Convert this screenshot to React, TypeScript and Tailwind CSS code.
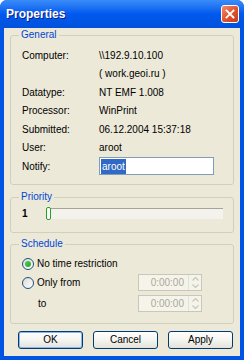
import React from 'react';

const font = { fontFamily: '"Liberation Sans", Arial, sans-serif' };

function Group({ title, className, children }: { title: string; className?: string; children: React.ReactNode }) {
  return (
    <fieldset className={`border border-[#D0D0BF] rounded-[3px] ${className ?? ''}`}>
      <legend className="ml-[8px] px-[2px] text-[#0046D5] text-[10px] leading-[12px]">{title}</legend>
      {children}
    </fieldset>
  );
}

function Radio({ checked }: { checked?: boolean }) {
  return (
    <span className="w-[12px] h-[12px] rounded-full border border-[#1C5180] bg-gradient-to-br from-[#DCDBD4] to-white flex items-center justify-center shrink-0">
      {checked && <span className="w-[6px] h-[6px] rounded-full bg-gradient-to-br from-[#55D051] to-[#21A121]" />}
    </span>
  );
}

function Spinner() {
  return (
    <div className="w-[64px] h-[17px] border border-[#C9C7BA] bg-[#F5F4EA] flex items-center">
      <span className="flex-1 text-right pr-[4px] text-[10px] text-[#ACA899]">0:00:00</span>
      <div className="w-[13px] h-full flex flex-col border-l border-[#E4E2D6]">
        <div className="flex-1 flex items-center justify-center">
          <svg width="7" height="4" viewBox="0 0 7 4"><path d="M0.5 3.5 L3.5 0.5 L6.5 3.5" stroke="#C9C7BA" fill="none" strokeWidth="1.2" /></svg>
        </div>
        <div className="flex-1 flex items-center justify-center">
          <svg width="7" height="4" viewBox="0 0 7 4"><path d="M0.5 0.5 L3.5 3.5 L6.5 0.5" stroke="#C9C7BA" fill="none" strokeWidth="1.2" /></svg>
        </div>
      </div>
    </div>
  );
}

function XpButton({ label, isDefault }: { label: string; isDefault?: boolean }) {
  return (
    <button
      className={`w-[65px] h-[18px] rounded-[3px] border border-[#003C74] bg-gradient-to-b from-white via-[#F4F4F0] to-[#E3E2DA] text-[10px] text-black leading-none ${
        isDefault ? 'shadow-[inset_0_0_0_1px_#8CB4F2]' : ''
      }`}
    >
      {label}
    </button>
  );
}

const rows: [string, string][] = [
  ['Computer:', '\\\\192.9.10.100'],
  ['', '( work.geoi.ru )'],
  ['Datatype:', 'NT EMF 1.008'],
  ['Processor:', 'WinPrint'],
  ['Submitted:', '06.12.2004 15:37:18'],
  ['User:', 'aroot'],
];

export default function App() {
  return (
    <div className="w-[244px] h-[360px] flex flex-col bg-[#0054E3] rounded-t-[7px] overflow-hidden" style={font}>
      {/* Заголовок окна */}
      <div className="h-[28px] shrink-0 flex items-center justify-between pl-[6px] pr-[5px] bg-gradient-to-b from-[#3A8CF8] via-[#0058EE] to-[#0052DC]">
        <span className="text-white font-bold text-[12px] [text-shadow:1px_1px_0_#0A1E8C]">Properties</span>
        <div className="w-[18px] h-[18px] rounded-[3px] border border-white bg-gradient-to-br from-[#F08B6B] via-[#E2542F] to-[#C43A14] flex items-center justify-center">
          <svg width="10" height="10" viewBox="0 0 10 10">
            <path d="M1.5 1.5 L8.5 8.5 M8.5 1.5 L1.5 8.5" stroke="white" strokeWidth="1.8" strokeLinecap="square" />
          </svg>
        </div>
      </div>

      {/* Тело диалога */}
      <div className="flex-1 mx-[4px] mb-[4px] bg-[#ECE9D8] px-[6px] pt-[1px] flex flex-col text-[10px] text-black">
        <Group title="General" className="pt-[5px] pb-[9px]">
          {rows.map(([k, v], i) => (
            <div key={i} className="h-[18.5px] flex items-center">
              <span className="w-[88px] pl-[11px]">{k}</span>
              <span>{v}</span>
            </div>
          ))}
          <div className="h-[18px] flex items-center">
            <span className="w-[88px] pl-[11px]">Notify:</span>
            <div className="w-[115px] h-[18px] border border-[#7F9DB9] bg-white flex items-center pl-[1px]">
              <span className="bg-[#316AC5] text-white px-[1px]">aroot</span>
            </div>
          </div>
        </Group>

        <Group title="Priority" className="mt-[6px] pt-[3px] pb-[12px]">
          <div className="h-[14px] flex items-center">
            <span className="w-[36px] pl-[11px] font-bold">1</span>
            <div className="relative w-[176px] h-[11px] border-t border-[#A6A39A] bg-[#F3F2EC]">
              <div className="absolute left-[-1px] top-[-2px] w-[5px] h-[13px] rounded-[2px] border border-[#21A121] bg-white" />
            </div>
          </div>
        </Group>

        <Group title="Schedule" className="mt-[5px] pt-[4px] pb-[10px]">
          <div className="h-[19px] flex items-center pl-[11px] gap-[3px]">
            <Radio checked />
            <span>No time restriction</span>
          </div>
          <div className="h-[19px] flex items-center pl-[11px]">
            <Radio />
            <span className="ml-[3px] w-[101px]">Only from</span>
            <Spinner />
          </div>
          <div className="h-[19px] flex items-center pl-[27px] mt-[2px]">
            <span className="w-[100px]">to</span>
            <Spinner />
          </div>
        </Group>

        <div className="flex justify-between mt-[7px] pl-[8px] pr-[1px]">
          <XpButton label="OK" isDefault />
          <XpButton label="Cancel" />
          <XpButton label="Apply" />
        </div>
      </div>
    </div>
  );
}
